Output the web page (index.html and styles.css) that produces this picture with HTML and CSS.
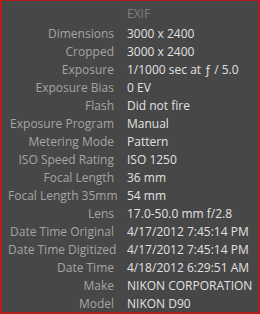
FILE: index.html
```html
<!DOCTYPE html>
<html lang="en">
<head>
    <meta charset="UTF-8">
    <title>EXIF</title>
    <link rel="stylesheet" href="styles.css">
</head>
<body>
    <div id="panel">
        <div class="head"></div><div class="head title">EXIF</div>
        <div class="lbl">Dimensions</div><div class="val">3000 x 2400</div>
        <div class="lbl">Cropped</div><div class="val">3000 x 2400</div>
        <div class="lbl">Exposure</div><div class="val">1/1000 sec at &#402; / 5.0</div>
        <div class="lbl">Exposure Bias</div><div class="val">0 EV</div>
        <div class="lbl">Flash</div><div class="val">Did not fire</div>
        <div class="lbl">Exposure Program</div><div class="val">Manual</div>
        <div class="lbl">Metering Mode</div><div class="val">Pattern</div>
        <div class="lbl">ISO Speed Rating</div><div class="val">ISO 1250</div>
        <div class="lbl">Focal Length</div><div class="val">36 mm</div>
        <div class="lbl">Focal Length 35mm</div><div class="val">54 mm</div>
        <div class="lbl">Lens</div><div class="val">17.0-50.0 mm f/2.8</div>
        <div class="lbl">Date Time Original</div><div class="val">4/17/2012 7:45:14 PM</div>
        <div class="lbl">Date Time Digitized</div><div class="val">4/17/2012 7:45:14 PM</div>
        <div class="lbl">Date Time</div><div class="val">4/18/2012 6:29:51 AM</div>
        <div class="lbl">Make</div><div class="val">NIKON CORPORATION</div>
        <div class="lbl">Model</div><div class="val">NIKON D90</div>
    </div>
</body>
</html>
```

FILE: styles.css
```css
html, body {
    margin: 0;
    padding: 0;
}
#panel {
    box-sizing: border-box;
    width: 260px;
    height: 314px;
    background-color: rgb(71, 71, 71);
    border: solid rgb(180, 30, 30);
    border-width: 1px 2px 2px 2px;
    padding: 4px 0 0 6px;
    display: grid;
    grid-template-columns: 106px 1fr;
    grid-template-rows: 20px;
    grid-auto-rows: 18px;
    column-gap: 13px;
    align-content: start;
    font-family: "Open Sans", "Noto Sans", sans-serif;
    font-size: 12px;
    line-height: 18px;
    white-space: nowrap;
}
.title {
    color: rgb(128, 128, 128);
}
.lbl {
    text-align: right;
    color: rgb(165, 165, 165);
}
.val {
    color: rgb(225, 225, 225);
}
```
